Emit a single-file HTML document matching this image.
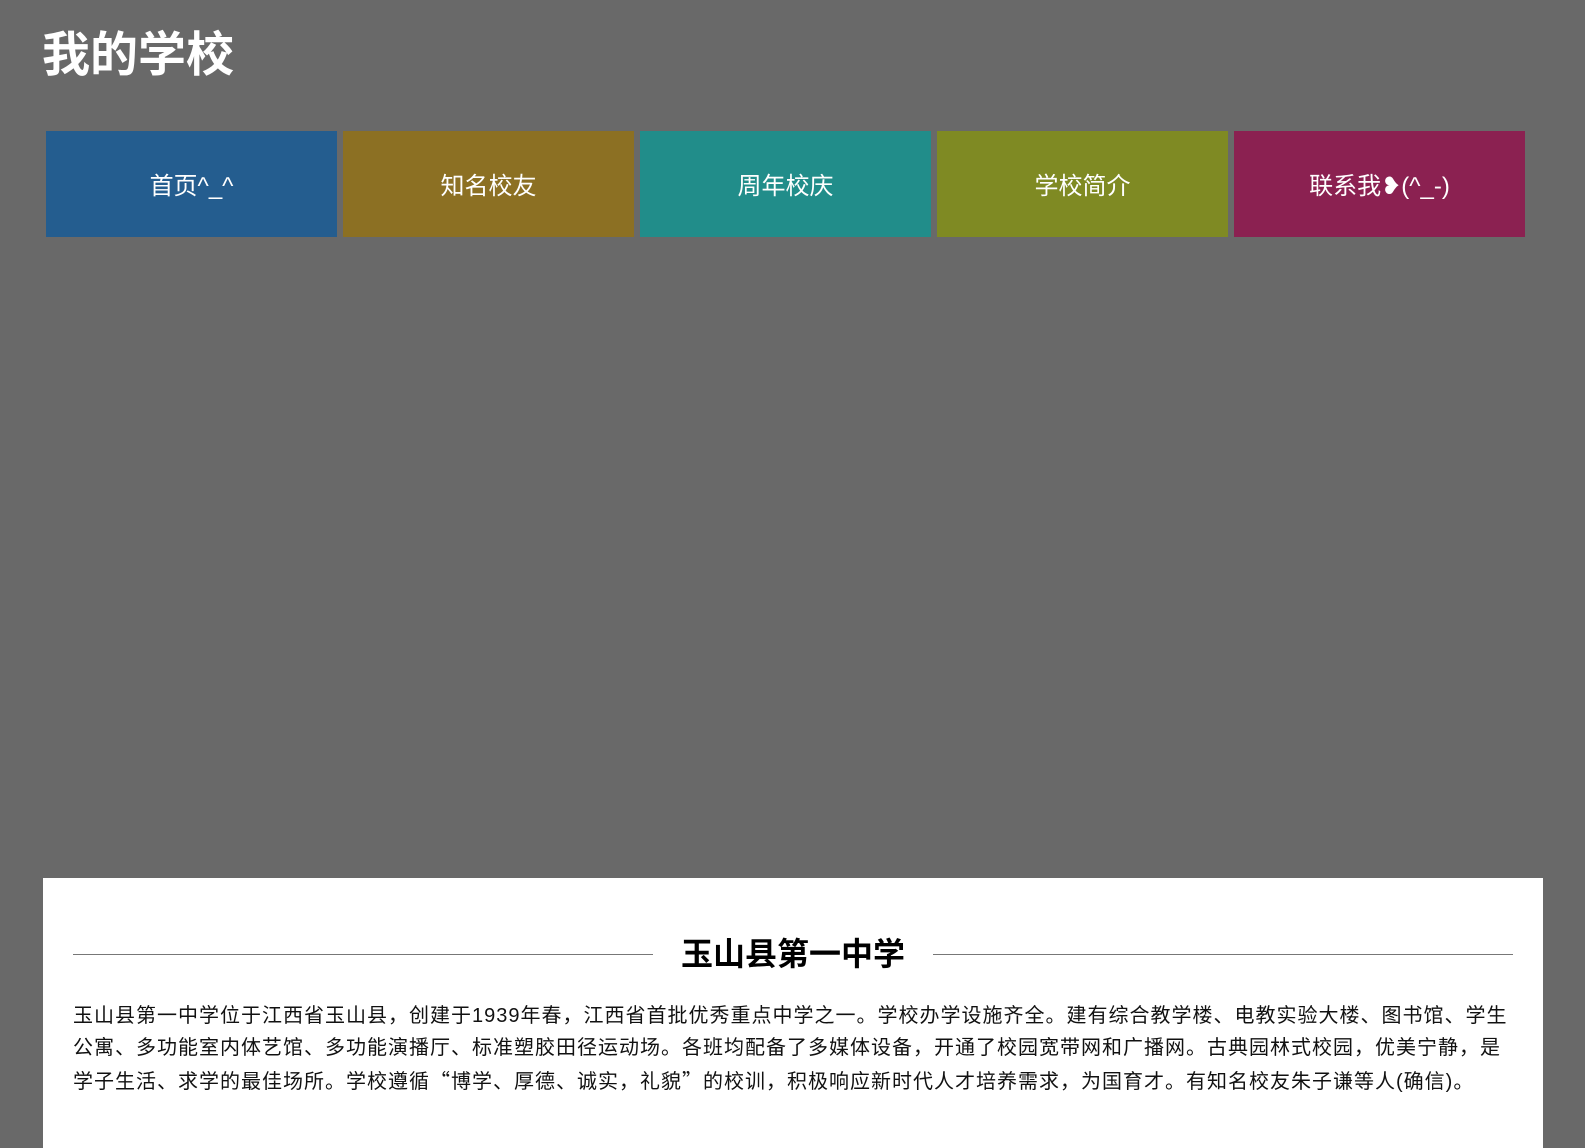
<!DOCTYPE html>
<html><head><meta charset="utf-8"><style>
html,body{margin:0;padding:0;}
body{width:1585px;height:1136px;background:#696969;position:relative;overflow:hidden;font-family:"Liberation Sans","Noto Sans CJK SC",sans-serif;}
h1{position:absolute;left:42px;top:24px;margin:0;font-size:48px;line-height:64px;color:#fff;font-weight:bold;}
.nav{position:absolute;top:131px;left:46px;display:flex;gap:6px;}
.nav div{width:291px;height:106px;line-height:112px;text-align:center;color:#fff;font-size:24px;}
.box{position:absolute;left:43px;top:878px;width:1500px;height:270px;background:#fff;}
.hd{position:absolute;left:30px;top:46px;width:1440px;height:60px;}
.hd .l{position:absolute;top:30px;height:1px;background:#777;width:580px;}
.hd h2{margin:0;text-align:center;font-size:32px;line-height:60px;font-weight:bold;color:#000;}
.box p{position:absolute;left:30px;top:122px;width:1460px;margin:0;font-size:20px;letter-spacing:1px;line-height:32px;color:#111;white-space:nowrap;}
.q{font-family:"Noto Sans CJK SC",sans-serif;}
</style></head><body>
<h1>我的学校</h1>
<div class="nav">
<div style="background:#245d8f">首页^_^</div>
<div style="background:#8c7023">知名校友</div>
<div style="background:#218d8a">周年校庆</div>
<div style="background:#7f8a23">学校简介</div>
<div style="background:#8b2151">联系我❥(^_-)</div>
</div>
<div class="box">
<div class="hd"><div class="l" style="left:0"></div><div class="l" style="right:0"></div><h2>玉山县第一中学</h2></div>
<p>玉山县第一中学位于江西省玉山县，创建于1939年春，江西省首批优秀重点中学之一。学校办学设施齐全。建有综合教学楼、电教实验大楼、图书馆、学生<br>公寓、多功能室内体艺馆、多功能演播厅、标准塑胶田径运动场。各班均配备了多媒体设备，开通了校园宽带网和广播网。古典园林式校园，优美宁静，是<br>学子生活、求学的最佳场所。学校遵循<span class="q">“</span>博学、厚德、诚实，礼貌<span class="q">”</span>的校训，积极响应新时代人才培养需求，为国育才。有知名校友朱子谦等人(确信)。</p>
</div>
</body></html>
